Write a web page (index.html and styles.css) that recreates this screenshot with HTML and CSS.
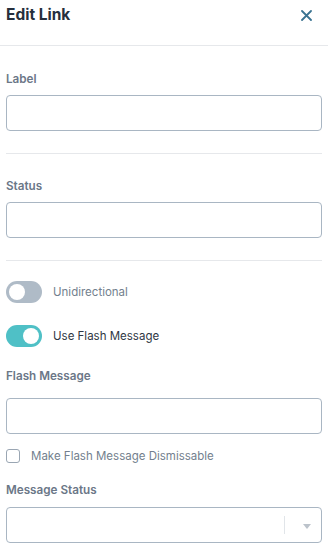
FILE: index.html
```html
<!DOCTYPE html>
<html lang="en">
<head>
  <meta charset="UTF-8" />
  <title>Edit Link</title>
  <link rel="stylesheet" href="styles.css">
</head>
<body>
  <div class="panel-header">
    <h1>Edit Link</h1>
    <button class="close-btn" title="Close">
      <svg width="11" height="11" viewBox="0 0 11 11"><path d="M1 1 L10 10 M10 1 L1 10" stroke="#3a7391" stroke-width="1.8" stroke-linecap="round"/></svg>
    </button>
  </div>

  <div class="panel-body">
    <div class="section">
      <label class="field-label" for="label">Label</label>
      <input type="text" id="label" class="text-input" />
    </div>

    <div class="section">
      <label class="field-label" for="status">Status</label>
      <input type="text" id="status" class="text-input" />
    </div>

    <div class="section last">
      <div class="toggle-row">
        <span class="toggle"><span class="knob"></span></span>
        <span class="toggle-text">Unidirectional</span>
      </div>
      <div class="toggle-row">
        <span class="toggle on"><span class="knob"></span></span>
        <span class="toggle-text dark">Use Flash Message</span>
      </div>

      <label class="field-label flash" for="flash">Flash Message</label>
      <input type="text" id="flash" class="text-input" />

      <div class="check-row">
        <span class="checkbox"></span>
        <span class="check-text">Make Flash Message Dismissable</span>
      </div>

      <label class="field-label msg" for="msgStatus">Message Status</label>
      <div class="select-box" id="msgStatus">
        <span class="select-value"></span>
        <span class="select-sep"></span>
        <span class="select-arrow"></span>
      </div>
    </div>
  </div>
</body>
</html>
```

FILE: styles.css
```css
body {
  margin: 0;
  font-family: Inter, "Noto Sans", sans-serif;
  background: #fff;
  color: #2d3748;
}

.panel-header {
  height: 46px;
  box-sizing: border-box;
  border-bottom: 1px solid #e6e8eb;
  display: flex;
  align-items: flex-start;
  justify-content: space-between;
  padding: 4px 6px 0 6px;
}

.panel-header h1 {
  margin: 0;
  font-size: 15.5px;
  line-height: 22px;
  font-weight: 700;
  color: #262f3d;
}

.close-btn {
  border: none;
  background: none;
  padding: 0;
  width: 34px;
  height: 22px;
  display: flex;
  align-items: center;
  justify-content: center;
  margin-right: -1px;
  cursor: pointer;
}

.panel-body {
  padding: 0 6px;
}

.section {
  padding: 26px 0 22px 0;
  border-bottom: 1px solid #e6e8eb;
}

.section + .section {
  padding-top: 25px;
}

.section.last {
  border-bottom: none;
  padding-top: 20px;
}

.field-label {
  display: block;
  font-size: 11.7px;
  line-height: 14px;
  font-weight: 600;
  color: #6b7787;
  margin-bottom: 9px;
}

.text-input {
  display: block;
  width: 100%;
  height: 36px;
  box-sizing: border-box;
  border: 1px solid #a9b6c3;
  border-radius: 4px;
  padding: 6px 8px;
  font-family: inherit;
  font-size: 12px;
  outline: none;
}

.toggle-row {
  display: flex;
  align-items: center;
  gap: 11px;
  height: 22px;
  margin-bottom: 22px;
}

.toggle {
  width: 36px;
  height: 22px;
  border-radius: 11px;
  background: #afbbc7;
  display: flex;
  align-items: center;
  padding: 0 3px;
  box-sizing: border-box;
}

.toggle.on {
  background: #4fc0c6;
  justify-content: flex-end;
}

.knob {
  width: 16px;
  height: 16px;
  border-radius: 50%;
  background: #fff;
}

.toggle-text {
  font-size: 11.5px;
  color: #737f8e;
}

.toggle-text.dark {
  color: #2f3744;
}

.field-label.flash {
  margin-top: 5px;
  margin-bottom: 15px;
}

.check-row {
  display: flex;
  align-items: center;
  gap: 11px;
  margin-top: 15px;
}

.checkbox {
  width: 14px;
  height: 14px;
  box-sizing: border-box;
  border: 1px solid #9aa6b3;
  border-radius: 3px;
}

.check-text {
  font-size: 11.5px;
  color: #737f8e;
}

.field-label.msg {
  margin-top: 20px;
  margin-bottom: 10px;
}

.select-box {
  height: 36px;
  box-sizing: border-box;
  border: 1px solid #a9b6c3;
  border-radius: 4px;
  display: flex;
  align-items: center;
}

.select-value {
  flex: 1;
}

.select-sep {
  width: 1px;
  height: 18px;
  background: #e1e5e9;
}

.select-arrow {
  width: 0;
  height: 0;
  border-left: 4px solid transparent;
  border-right: 4px solid transparent;
  border-top: 5px solid #bcc3cb;
  margin: 2px 10px 0 18px;
}
```
